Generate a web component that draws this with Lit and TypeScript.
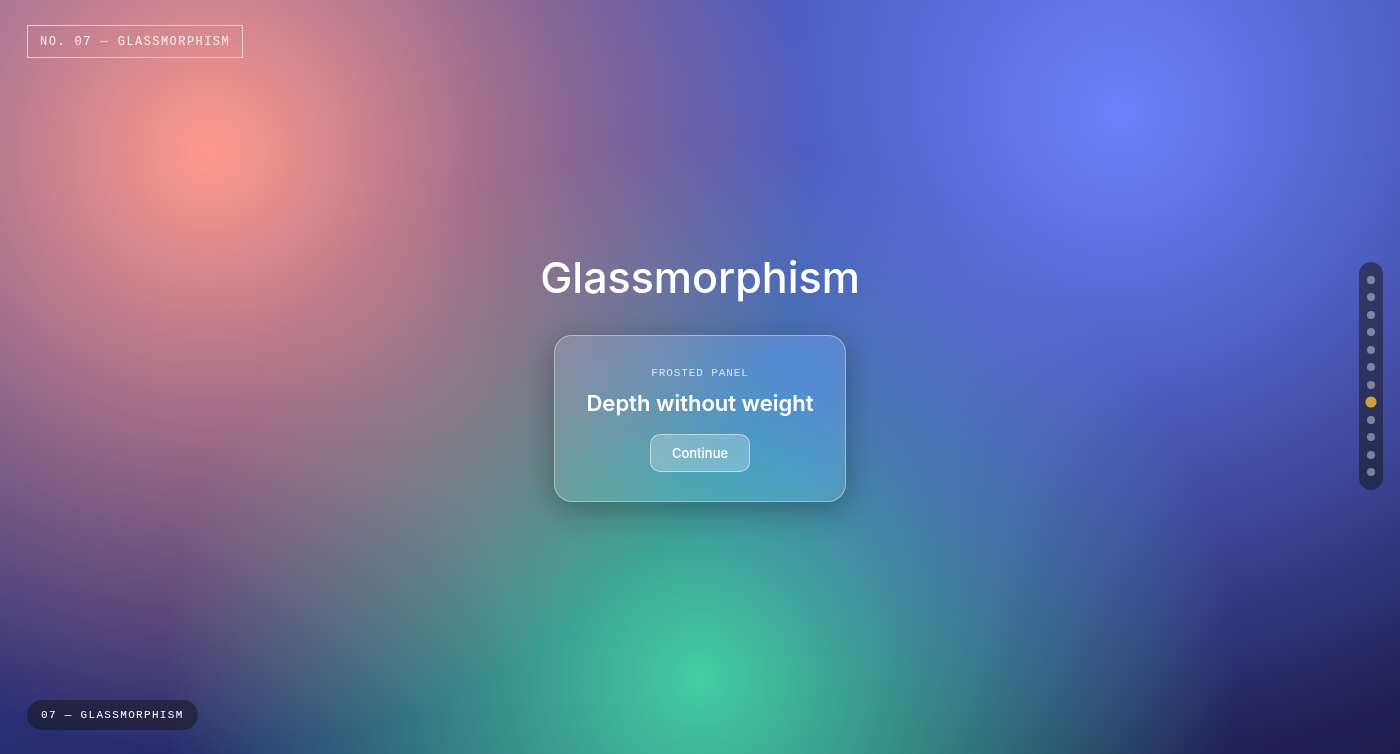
import { LitElement, html, css } from "lit";
import { customElement, state } from "lit/decorators.js";
import { classMap } from "lit/directives/class-map.js";

@customElement("app-root")
export class AppRoot extends LitElement {
  static styles = css`
    :host {
      display: block;
      font-family: Inter, "Open Sans", sans-serif;
      color: #fff;
    }
    .stage {
      box-sizing: border-box;
      min-height: 100vh;
      padding: 22px 17px 24px;
      display: grid;
      grid-template-columns: 1fr auto 1fr;
      grid-template-rows: 1fr auto 1fr;
      background:
        radial-gradient(circle at 15% 20%, #ff9a8b 0%, transparent 45%),
        radial-gradient(circle at 80% 15%, #6a82fb 0%, transparent 50%),
        radial-gradient(circle at 50% 90%, #43cea2 0%, transparent 55%),
        linear-gradient(160deg, #3a46a2, #1e1e50);
    }
    .mono {
      font-family: "Liberation Mono", monospace;
      text-transform: uppercase;
    }
    .tag,
    .pill {
      grid-column: 1;
      justify-self: start;
      margin: 0 0 0 10px;
      letter-spacing: 0.12em;
      white-space: nowrap;
    }
    .tag {
      grid-row: 1;
      align-self: start;
      margin-top: 3px;
      padding: 9px 12px 7px;
      border: 1px solid rgba(255, 255, 255, 0.6);
      font-size: 12px;
      line-height: 15px;
      color: rgba(255, 255, 255, 0.85);
    }
    .pill {
      grid-row: 3;
      align-self: end;
      padding: 7px 14px;
      border-radius: 15px;
      background: rgba(20, 20, 20, 0.5);
      font-size: 11px;
      line-height: 16px;
    }
    .hero {
      grid-area: 2 / 2;
      display: flex;
      flex-direction: column;
      align-items: center;
      gap: 32px;
    }
    .title {
      margin: 0;
      font-size: 43px;
      line-height: 52px;
      font-weight: 500;
    }
    .card {
      display: flex;
      flex-direction: column;
      align-items: center;
      padding: 29px 31px;
      border: 1px solid rgba(255, 255, 255, 0.4);
      border-radius: 18px;
      background: rgba(255, 255, 255, 0.14);
      backdrop-filter: blur(16px) saturate(140%);
      box-shadow: 0 8px 32px rgba(0, 0, 0, 0.3);
    }
    .eyebrow {
      margin: 0 0 8px;
      font-size: 11px;
      line-height: 16px;
      letter-spacing: 0.08em;
      color: rgba(255, 255, 255, 0.75);
    }
    .heading {
      margin: 0 0 17px;
      font-size: 22px;
      line-height: 28px;
      font-weight: 600;
    }
    .continue {
      padding: 10px 21px;
      border: 1px solid rgba(255, 255, 255, 0.5);
      border-radius: 10px;
      background: rgba(255, 255, 255, 0.25);
      color: inherit;
      font: 500 13px/16px Inter, sans-serif;
      cursor: pointer;
    }
    .dots {
      grid-area: 2 / 3;
      justify-self: end;
      align-self: center;
      box-sizing: border-box;
      min-height: 228px;
      padding: 14px 8px;
      border-radius: 12px;
      background: rgba(20, 20, 20, 0.5);
      display: flex;
      flex-direction: column;
      justify-content: space-between;
    }
    .dot {
      width: 8px;
      height: 8px;
      padding: 0;
      border: 0;
      border-radius: 50%;
      background: rgba(255, 255, 255, 0.4);
      cursor: pointer;
    }
    .dot.active {
      background: #d4a039;
      transform: scale(1.4);
    }
  `;

  @state() private current = 7;

  render() {
    return html`
      <main class="stage">
        <p class="tag mono">No. 07 — Glassmorphism</p>
        <section class="hero">
          <h1 class="title">Glassmorphism</h1>
          <div class="card">
            <p class="eyebrow mono">Frosted panel</p>
            <h2 class="heading">Depth without weight</h2>
            <button class="continue" type="button">Continue</button>
          </div>
        </section>
        <nav class="dots" aria-label="Sections">
          ${Array.from(
            { length: 12 },
            (_, i) => html`<button
              type="button"
              class=${classMap({ dot: true, active: i === this.current })}
              aria-label=${`Section ${i}`}
              @click=${() => (this.current = i)}
            ></button>`
          )}
        </nav>
        <p class="pill mono">07 — Glassmorphism</p>
      </main>
    `;
  }
}
